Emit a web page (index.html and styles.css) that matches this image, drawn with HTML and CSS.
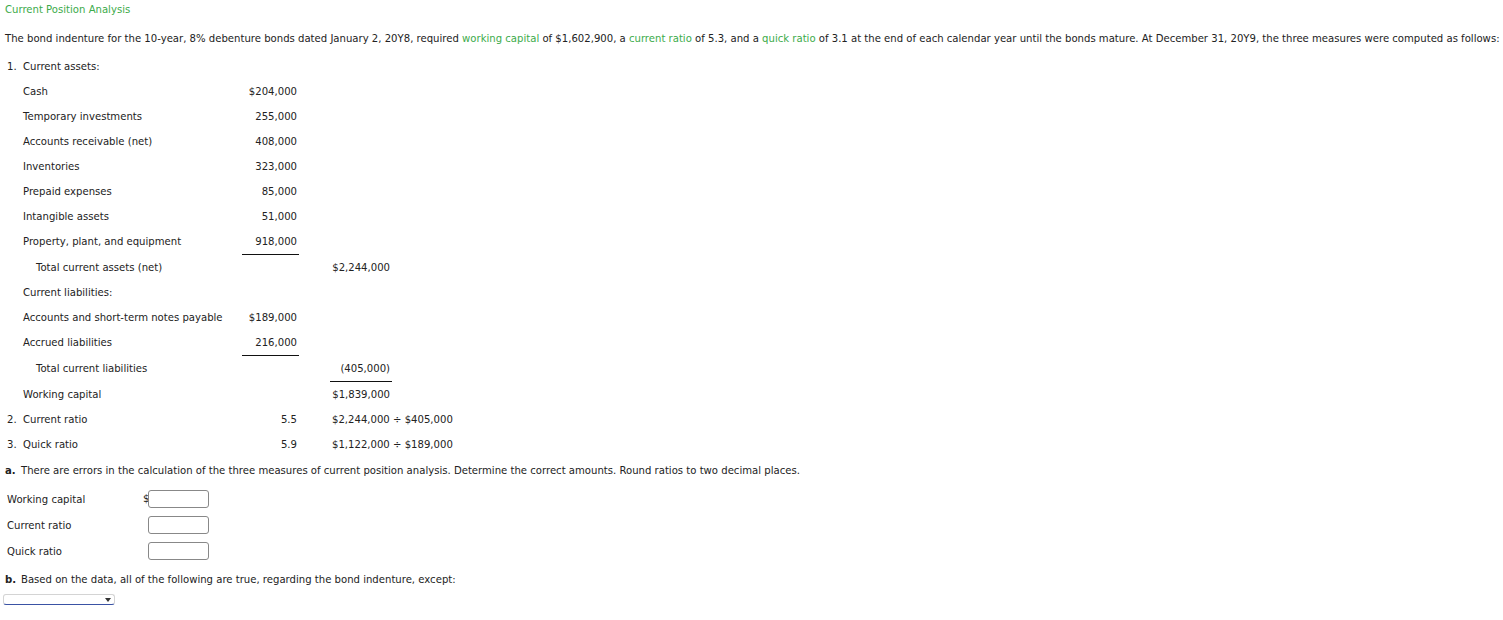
FILE: index.html
```html
<!DOCTYPE html>
<html>
<head>
<meta charset="utf-8">
<link rel="stylesheet" href="styles.css">
</head>
<body>
<div class="page">
  <div class="title">Current Position Analysis</div>
  <p class="intro">The bond indenture for the 10-year, 8% debenture bonds dated January 2, 20Y8, required <span class="term">working capital</span> of $1,602,900, a <span class="term">current ratio</span> of 5.3, and a <span class="term">quick ratio</span> of 3.1 at the end of each calendar year until the bonds mature. At December 31, 20Y9, the three measures were computed as follows:</p>

  <div class="sheet">
    <div class="num">1.</div><div class="lbl">Current assets:</div><div class="c2"></div><div class="gap"></div><div class="c3"></div>

    <div class="num"></div><div class="lbl">Cash</div><div class="c2">$204,000</div><div class="gap"></div><div class="c3"></div>
    <div class="num"></div><div class="lbl">Temporary investments</div><div class="c2">255,000</div><div class="gap"></div><div class="c3"></div>
    <div class="num"></div><div class="lbl">Accounts receivable (net)</div><div class="c2">408,000</div><div class="gap"></div><div class="c3"></div>
    <div class="num"></div><div class="lbl">Inventories</div><div class="c2">323,000</div><div class="gap"></div><div class="c3"></div>
    <div class="num"></div><div class="lbl">Prepaid expenses</div><div class="c2">85,000</div><div class="gap"></div><div class="c3"></div>
    <div class="num"></div><div class="lbl">Intangible assets</div><div class="c2">51,000</div><div class="gap"></div><div class="c3"></div>
    <div class="num"></div><div class="lbl">Property, plant, and equipment</div><div class="c2 rule">918,000</div><div class="gap"></div><div class="c3"></div>
    <div class="num"></div><div class="lbl sub">Total current assets (net)</div><div class="c2"></div><div class="gap"></div><div class="c3">$2,244,000</div>
    <div class="num"></div><div class="lbl">Current liabilities:</div><div class="c2"></div><div class="gap"></div><div class="c3"></div>
    <div class="num"></div><div class="lbl">Accounts and short-term notes payable</div><div class="c2">$189,000</div><div class="gap"></div><div class="c3"></div>
    <div class="num"></div><div class="lbl">Accrued liabilities</div><div class="c2 rule">216,000</div><div class="gap"></div><div class="c3"></div>
    <div class="num"></div><div class="lbl sub">Total current liabilities</div><div class="c2"></div><div class="gap"></div><div class="c3 rule">(405,000)</div>
    <div class="num"></div><div class="lbl">Working capital</div><div class="c2"></div><div class="gap"></div><div class="c3">$1,839,000</div>
    <div class="num">2.</div><div class="lbl">Current ratio</div><div class="c2">5.5</div><div class="gap"></div><div class="c3 formula">$2,244,000 ÷ $405,000</div>
    <div class="num">3.</div><div class="lbl">Quick ratio</div><div class="c2">5.9</div><div class="gap"></div><div class="c3 formula">$1,122,000 ÷ $189,000</div>
  </div>

  <p class="part"><b>a.</b>There are errors in the calculation of the three measures of current position analysis. Determine the correct amounts. Round ratios to two decimal places.</p>

  <div class="answers">
    <div class="alabel">Working capital</div><div class="cur">$</div><div class="box"></div>
    <div class="alabel">Current ratio</div><div class="cur"></div><div class="box"></div>
    <div class="alabel">Quick ratio</div><div class="cur"></div><div class="box"></div>
  </div>

  <p class="part partb"><b>b.</b>Based on the data, all of the following are true, regarding the bond indenture, except:</p>

  <div class="select"><span class="arrow"></span></div>
</div>
</body>
</html>
```

FILE: styles.css
```css
html, body {
  margin: 0;
  padding: 0;
  background: #fff;
}
.page {
  font-family: "DejaVu Sans", Verdana, sans-serif;
  font-size: 10.1px;
  color: #222;
  padding: 3px 5px 0 5px;
}
.title {
  color: #3cab4a;
  line-height: 14px;
  height: 14px;
}
.term {
  color: #3cab4a;
}
.intro {
  margin: 15px 0 0 0;
  line-height: 14px;
  white-space: nowrap;
}
.sheet {
  margin-top: 8px;
  display: grid;
  grid-template-columns: 16px 219px 57px 31px 62px;
  margin-left: 2px;
}
.sheet > div {
  height: 25px;
  line-height: 25px;
  white-space: nowrap;
}
.c2, .c3 {
  text-align: right;
  padding-right: 2px;
}
.rule {
  border-bottom: 1px solid #111;
}
.sub {
  padding-left: 13px;
}
.formula {
  text-align: left;
  padding-left: 2px;
  overflow: visible;
}
.part {
  margin: 7px 0 0 0;
  line-height: 14px;
  white-space: nowrap;
}
.part b {
  display: inline-block;
  width: 16px;
}
.answers {
  margin-top: 8px;
  display: grid;
  grid-template-columns: 136px 5px 62px;
  grid-auto-rows: 26px;
  margin-left: 2px;
  align-items: center;
}
.cur {
  line-height: 14px;
}
.box {
  width: 59px;
  height: 16px;
  border: 1px solid #888;
  border-radius: 3px;
  margin-top: -1px;
}
.partb {
  margin-top: 9px;
}
.select {
  margin: 7px 0 0 -2px;
  width: 110px;
  height: 9px;
  border: 1px solid #d4d4d4;
  border-bottom: 1px solid #3a52a4;
  border-radius: 3px;
  position: relative;
}
.arrow {
  position: absolute;
  right: 3px;
  top: 3px;
  width: 0;
  height: 0;
  border-left: 3px solid transparent;
  border-right: 3px solid transparent;
  border-top: 4px solid #333;
}
```
